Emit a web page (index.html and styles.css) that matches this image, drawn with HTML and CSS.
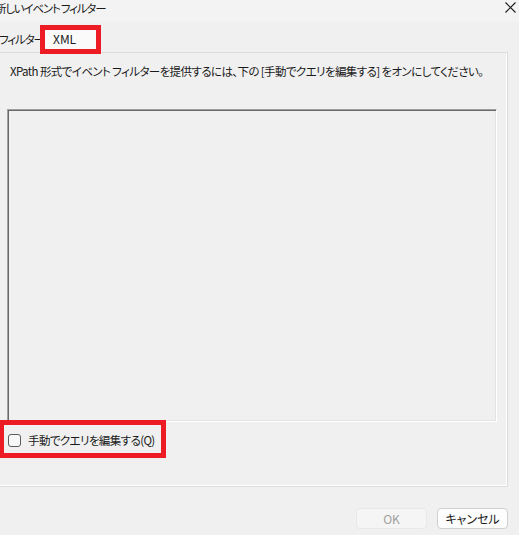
FILE: index.html
```html
<!DOCTYPE html>
<html lang="ja">
<head>
<meta charset="utf-8">
<link rel="stylesheet" href="styles.css">
</head>
<body>
<div class="window">
  <div class="titlebar">
    <span class="title">新しいイベント フィルター</span>
    <svg class="close" width="11" height="11" viewBox="0 0 11 11"><path d="M0.5 0.5 L10.5 10.5 M10.5 0.5 L0.5 10.5" stroke="#1a1a1a" stroke-width="1.1" fill="none"/></svg>
  </div>
  <div class="tabs">
    <span class="tab">フィルター</span>
    <span class="tab active">XML</span>
  </div>
  <div class="panel">
    <p class="desc">XPath 形式でイベント フィルターを提供するには、下の [手動でクエリを編集する] をオンにしてください。</p>
    <div class="editor"></div>
    <label class="check"><span class="box"></span><span class="label">手動でクエリを編集する(Q)</span></label>
  </div>
  <div class="buttons">
    <button class="btn" disabled>OK</button>
    <button class="btn">キャンセル</button>
  </div>
</div>
</body>
</html>
```
FILE: styles.css
```css
html, body {
  margin: 0;
  padding: 0;
  background: #f0f0f0;
}
body {
  font-family: "Noto Sans CJK JP", "Noto Sans", sans-serif;
  font-size: 12px;
  color: #1a1a1a;
  font-feature-settings: "palt";
  overflow: hidden;
}
.window {
  width: 519px;
  height: 535px;
  display: flex;
  flex-direction: column;
}
.titlebar {
  height: 22px;
  background: #f3f3f3;
  display: flex;
  align-items: flex-start;
  justify-content: space-between;
}
.title {
  margin-left: -5px;
  line-height: 16px;
  font-size: 11.5px;
  letter-spacing: -1.2px;
  white-space: nowrap;
}
.close {
  margin-top: 2px;
  margin-right: 3px;
}
.tabs {
  height: 30px;
  display: flex;
  align-items: flex-start;
  padding-top: 8px;
  box-sizing: border-box;
}
.tab {
  height: 19px;
  line-height: 18px;
  white-space: nowrap;
}
.tab:first-child {
  width: 46px;
  margin-left: -1px;
  font-size: 11.5px;
  letter-spacing: -1.1px;
}
.tab.active {
  width: 51px;
  box-sizing: border-box;
  padding-left: 8px;
  background: #fafafa;
  outline: 5px solid #ed1c24;
  position: relative;
  z-index: 2;
}
.panel {
  width: 508px;
  height: 435px;
  box-sizing: border-box;
  border-top: 1px solid #dcdcdc;
  border-right: 1px solid #dcdcdc;
  border-bottom: 1px solid #dcdcdc;
  box-shadow: inset -1px -1px 0 #fff;
  display: flex;
  flex-direction: column;
}
.desc {
  margin: 0;
  padding: 10px 0 0 10px;
  line-height: 16px;
  font-size: 11.5px;
  letter-spacing: -0.6px;
  white-space: nowrap;
}
.editor {
  margin: 30px 0 0 7px;
  width: 490px;
  height: 313px;
  box-sizing: border-box;
  border-top: 1px solid #a0a0a0;
  border-left: 1px solid #a0a0a0;
  border-right: 1px solid #ffffff;
  border-bottom: 1px solid #ffffff;
  box-shadow: inset 1px 1px 0 #696969, inset -1px -1px 0 #e3e3e3;
  background: #f0f0f0;
}
.check {
  margin: 3px 0 0 4px;
  width: 157px;
  height: 28px;
  display: flex;
  align-items: center;
  outline: 5px solid #ed1c24;
  position: relative;
  z-index: 2;
}
.box {
  flex: none;
  width: 13px;
  height: 13px;
  box-sizing: border-box;
  border: 1px solid #5c5c5c;
  border-radius: 3px;
  background: #f7f7f7;
  margin-left: 4px;
  margin-top: 2px;
}
.label {
  margin-left: 7px;
  margin-top: 2px;
  font-size: 11.5px;
  letter-spacing: -0.6px;
  white-space: nowrap;
}
.buttons {
  display: flex;
  justify-content: flex-end;
  gap: 10px;
  padding: 21px 11px 0 0;
}
.btn {
  width: 71px;
  height: 21px;
  padding: 0;
  font-family: inherit;
  font-size: 12px;
  font-feature-settings: "palt";
  border: 1px solid #d0d0d0;
  border-radius: 4px;
  background: #fdfdfd;
  color: #1a1a1a;
  line-height: 18px;
}
.btn:disabled {
  background: #f5f5f5;
  border-color: #e8e8e8;
  color: #a0a0a0;
}
```
